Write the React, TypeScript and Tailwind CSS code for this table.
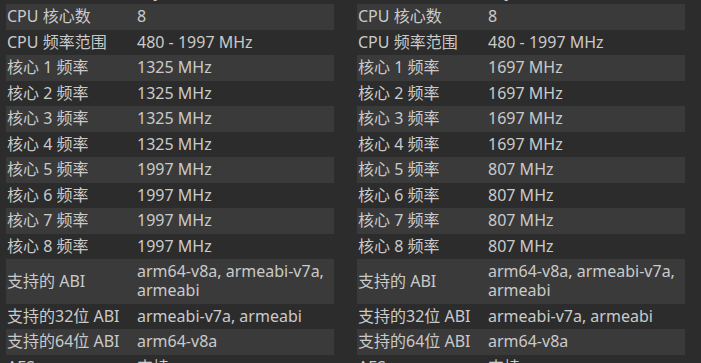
import React from "react";

type Row = [string, string];

const left: Row[] = [
  ["Vendor", "Kryo"],
  ["CPU 核心数", "8"],
  ["CPU 频率范围", "480 - 1997 MHz"],
  ["核心 1 频率", "1325 MHz"],
  ["核心 2 频率", "1325 MHz"],
  ["核心 3 频率", "1325 MHz"],
  ["核心 4 频率", "1325 MHz"],
  ["核心 5 频率", "1997 MHz"],
  ["核心 6 频率", "1997 MHz"],
  ["核心 7 频率", "1997 MHz"],
  ["核心 8 频率", "1997 MHz"],
  ["支持的 ABI", "arm64-v8a, armeabi-v7a, armeabi"],
  ["支持的32位 ABI", "armeabi-v7a, armeabi"],
  ["支持的64位 ABI", "arm64-v8a"],
  ["AES", "支持"],
];

const right: Row[] = [
  ["Vendor", "Kryo"],
  ["CPU 核心数", "8"],
  ["CPU 频率范围", "480 - 1997 MHz"],
  ["核心 1 频率", "1697 MHz"],
  ["核心 2 频率", "1697 MHz"],
  ["核心 3 频率", "1697 MHz"],
  ["核心 4 频率", "1697 MHz"],
  ["核心 5 频率", "807 MHz"],
  ["核心 6 频率", "807 MHz"],
  ["核心 7 频率", "807 MHz"],
  ["核心 8 频率", "807 MHz"],
  ["支持的 ABI", "arm64-v8a, armeabi-v7a, armeabi"],
  ["支持的32位 ABI", "armeabi-v7a, armeabi"],
  ["支持的64位 ABI", "arm64-v8a"],
  ["AES", "支持"],
];

function Table({ rows }: { rows: Row[] }) {
  return (
    <div className="w-[328px] flex flex-col -mt-[21.5px]">
      {rows.map(([k, v], i) => (
        <div
          key={i}
          className={`flex items-center py-[3.25px] leading-[19px] ${
            i % 2 === 1 ? "bg-[#3a3a3a]" : ""
          }`}
        >
          <div className="w-[131px] shrink-0 pl-[1px]">{k}</div>
          <div className="flex-1 min-w-0">{v}</div>
        </div>
      ))}
    </div>
  );
}

export default function App() {
  return (
    <div
      className="w-[701px] h-[363px] overflow-hidden bg-[#2c2c2c] text-[#cacaca] text-[16px] flex pl-[6px] gap-[23px]"
      style={{ fontFamily: '"Noto Sans", "Noto Sans CJK SC", sans-serif' }}
    >
      <Table rows={left} />
      <Table rows={right} />
    </div>
  );
}
